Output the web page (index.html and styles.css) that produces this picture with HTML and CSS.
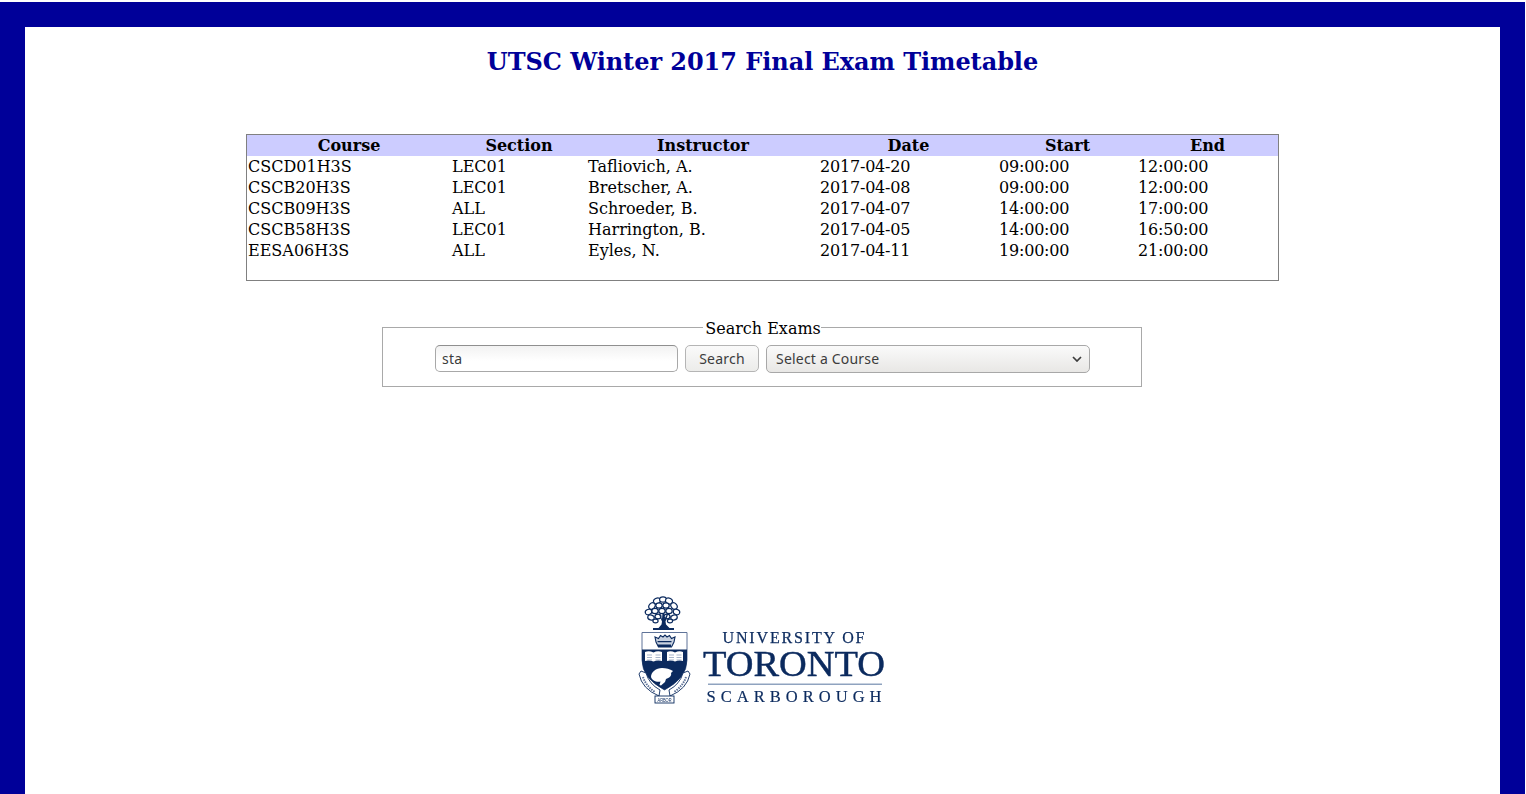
FILE: index.html
```html
<!DOCTYPE html>
<html lang="en">
<head>
<meta charset="utf-8">
<title>UTSC Winter 2017 Final Exam Timetable</title>
<link rel="stylesheet" href="styles.css">
</head>
<body>
<main class="frame">
  <h1 class="title">UTSC Winter 2017 Final Exam Timetable</h1>
  <div class="table-box">
    <table class="exams">
      <colgroup>
        <col class="c-course"><col class="c-section"><col class="c-instructor"><col class="c-date"><col class="c-start"><col class="c-end">
      </colgroup>
      <thead>
        <tr><th>Course</th><th>Section</th><th>Instructor</th><th>Date</th><th>Start</th><th>End</th></tr>
      </thead>
      <tbody>
        <tr><td>CSCD01H3S</td><td>LEC01</td><td>Tafliovich, A.</td><td class="num">2017-04-20</td><td class="num">09:00:00</td><td class="num">12:00:00</td></tr>
        <tr><td>CSCB20H3S</td><td>LEC01</td><td>Bretscher, A.</td><td class="num">2017-04-08</td><td class="num">09:00:00</td><td class="num">12:00:00</td></tr>
        <tr><td>CSCB09H3S</td><td>ALL</td><td>Schroeder, B.</td><td class="num">2017-04-07</td><td class="num">14:00:00</td><td class="num">17:00:00</td></tr>
        <tr><td>CSCB58H3S</td><td>LEC01</td><td>Harrington, B.</td><td class="num">2017-04-05</td><td class="num">14:00:00</td><td class="num">16:50:00</td></tr>
        <tr><td>EESA06H3S</td><td>ALL</td><td>Eyles, N.</td><td class="num">2017-04-11</td><td class="num">19:00:00</td><td class="num">21:00:00</td></tr>
      </tbody>
    </table>
  </div>
  <fieldset class="search">
    <legend class="search-legend">Search Exams</legend>
    <div class="search-row">
      <input class="search-input" type="text" value="sta">
      <button class="search-btn" type="button">Search</button>
      <div class="select-wrap">
        <select class="course-select"><option>Select a Course</option></select>
        <svg class="chevron" viewBox="0 0 10 6" width="10" height="6"><path d="M1 1l4 4 4-4" fill="none" stroke="#3c3c3c" stroke-width="1.7"/></svg>
      </div>
    </div>
  </fieldset>
  <div class="logo-row">
    <svg class="logo" viewBox="636 595 252 112" width="252" height="112">
      <!-- tree canopy -->
      <g class="leaves">
        <ellipse cx="656" cy="601" rx="3.600" ry="2.800" transform="rotate(-30 656 601)"/>
        <ellipse cx="662" cy="599.500" rx="3.400" ry="2.700"/>
        <ellipse cx="668" cy="601" rx="3.600" ry="2.800" transform="rotate(30 668 601)"/>
        <ellipse cx="651" cy="606" rx="3.600" ry="2.800" transform="rotate(-50 651 606)"/>
        <ellipse cx="658" cy="605.500" rx="3.200" ry="2.600"/>
        <ellipse cx="665" cy="605.500" rx="3.200" ry="2.600"/>
        <ellipse cx="673" cy="606" rx="3.600" ry="2.800" transform="rotate(50 673 606)"/>
        <ellipse cx="647.500" cy="612" rx="3.300" ry="2.600" transform="rotate(-20 647.500 612)"/>
        <ellipse cx="654" cy="611" rx="3.200" ry="2.600"/>
        <ellipse cx="661" cy="611" rx="3.200" ry="2.600"/>
        <ellipse cx="668" cy="611" rx="3.200" ry="2.600"/>
        <ellipse cx="675.500" cy="612" rx="3.300" ry="2.600" transform="rotate(20 675.500 612)"/>
        <ellipse cx="650" cy="617.500" rx="3.300" ry="2.500" transform="rotate(15 650 617.500)"/>
        <ellipse cx="657" cy="616.500" rx="3" ry="2.400"/>
        <ellipse cx="666" cy="616.500" rx="3" ry="2.400"/>
        <ellipse cx="673" cy="617.500" rx="3.300" ry="2.500" transform="rotate(-15 673 617.500)"/>
        <ellipse cx="654.500" cy="621" rx="2.600" ry="1.800"/>
        <ellipse cx="669" cy="621" rx="2.600" ry="1.800"/>
      </g>
      <path class="ink" d="M658.500 614l2.500 5 .5-6h1.500l.5 6 2.500-5 1 .5-2.500 7 .5 3 3.500 3.500h-11l3-3.500.5-3-3-7z"/>
      <rect class="ink" x="652" y="628" width="21" height="2"/>
      <!-- shield -->
      <path class="shield" d="M641 632.500H686V660Q686 678 663.500 690Q641 678 641 660Z"/>
      <path class="ink" d="M641 649.500H686V660Q686 678 663.500 690Q641 678 641 660Z"/>
      <!-- crown -->
      <path class="crown" d="M654 637l3.500 1.500 2-3 2.500 1.500 2-2 2 2 2.500-1.500 2 3 3.500-1.500-1 5-2.500 5h-13l-2.500-5z"/>
      <path class="ink" d="M656.500 641h14v1.300h-14zM657 644.500h13v2.500h-13z"/>
      <!-- books -->
      <path class="page" d="M644 652q4-1.500 8.500.5q4-2 8.500-.5v9q-4.500-1-8.500.5q-4.500-1.500-8.500-.5zM666 652q4-1.500 8 .5q4-2 8-.5v9q-4-1-8 .5q-4-1.500-8-.5z"/>
      <path class="page-lines" d="M646 655h5M646 657.500h5M646 660h5M654.500 655h5M654.500 657.500h5M654.500 660h5M668 655h5M668 657.500h5M668 660h5M675.500 655h5M675.500 657.500h5M675.500 660h5"/>
      <!-- beaver -->
      <path class="page" d="M650 677c0-5 5-9 11-9c4 0 8 1 11 3l-2 2c1 3-2 5-5 6l-1 3-4 3.500-1.500-.5 1-3.500c-4 1-8.500-1-9.500-4.500z"/>
      <!-- ribbons and motto -->
      <path class="ribbon" d="M640 671l5 2q3 11 14 17l-1 6q-17-7-20-22zM687 671l-5 2q-3 11-14 17l1 6q17-7 20-22z"/>
      <path class="motto-marks" d="M642 677q3 9 12 15M685 677q-3 9-12 15"/>
      <rect class="ribbon" x="654" y="696" width="19" height="7"/>
      <text class="logo-motto" x="663.500" y="701.500" text-anchor="middle" textLength="14" lengthAdjust="spacingAndGlyphs">ARBOR</text>
      <text class="logo-t1" x="721.500" y="642.500" textLength="142">UNIVERSITY OF</text>
      <text class="logo-t2" x="702" y="676" textLength="182" lengthAdjust="spacingAndGlyphs">TORONTO</text>
      <rect class="logo-rule" x="707" y="683.500" width="174" height="1.500"/>
      <text class="logo-t3" x="705.500" y="702" textLength="175">SCARBOROUGH</text>
    </svg>
  </div>
</main>
</body>
</html>
```

FILE: styles.css
```css
html, body {
  margin: 0;
  padding: 0;
  background: #fff;
  height: 100%;
  overflow: hidden;
}

body {
  padding: 2px 1px 0 0;
  box-sizing: border-box;
  font-family: "DejaVu Serif", serif;
  font-size: 16px;
  color: #000;
}

.frame {
  box-sizing: border-box;
  height: 100%;
  border: 25px solid #000099;
  border-bottom: 0;
  padding-top: 18px;
}

.title {
  margin: 0;
  text-align: center;
  color: #000099;
  font-size: 24px;
  line-height: 34px;
  font-weight: bold;
  letter-spacing: -0.05px;
}

.table-box {
  width: 1031px;
  height: 145px;
  margin: 55px auto 0;
  border: 1px solid #808080;
}

.exams {
  width: 1031px;
  table-layout: fixed;
  border-collapse: collapse;
}

.c-course { width: 204px; }
.c-section { width: 136px; }
.c-instructor { width: 232px; }
.c-date { width: 179px; }
.c-start { width: 139px; }
.c-end { width: 141px; }

.exams th {
  background: #ccccff;
  padding: 1px;
  font-weight: bold;
  text-align: center;
  line-height: 19px;
}

.exams td {
  padding: 1px;
  text-align: left;
  line-height: 19px;
}

.exams .num {
  letter-spacing: -0.2px;
}

.search {
  width: 758px;
  box-sizing: content-box;
  margin: 36px auto 0 357px;
  padding: 7px 0 13px;
  border: 1px solid #a9a9a9;
  min-width: 0;
}

.search-legend {
  padding: 2px 0 0 2px;
  margin: 0 auto;
  text-align: center;
  line-height: 19px;
}

.search-row {
  display: flex;
  justify-content: center;
  align-items: flex-start;
  gap: 7px;
  padding-left: 1px;
  font-family: "Noto Sans", "Open Sans", sans-serif;
  font-size: 14px;
  letter-spacing: 0.2px;
}

.search-input,
.search-btn,
.course-select {
  box-sizing: border-box;
  margin: 0;
  font: inherit;
  letter-spacing: inherit;
  color: #3c3c3c;
  border-radius: 5px;
  height: 27px;
  outline: none;
}

.search-input {
  width: 243px;
  padding: 0 6px;
  border: 1px solid #a8a8a8;
  border-top-color: #8f8f8f;
  background: linear-gradient(#f2f2f2, #fff 60%);
}

.search-btn {
  width: 74px;
  padding: 0;
  border: 1px solid #b5b5b5;
  background: linear-gradient(#fafafa, #ececea);
}

.select-wrap {
  position: relative;
  width: 324px;
  height: 28px;
}

.course-select {
  appearance: none;
  -webkit-appearance: none;
  width: 100%;
  height: 28px;
  padding: 0 9px 2px;
  border: 1px solid #a8a8a8;
  background: linear-gradient(#fafafa, #e8e7e5);
}

.chevron {
  position: absolute;
  right: 8px;
  top: 11px;
}

.logo-row {
  margin-top: 208px;
  text-align: center;
  line-height: 0;
}

.logo {
  display: inline-block;
  filter: blur(0.4px);
}

.ink { fill: #0b2a5e; }

.leaves ellipse {
  fill: #fff;
  stroke: #0b2a5e;
  stroke-width: 1.2;
}

.shield {
  fill: #fff;
  stroke: #5f7398;
  stroke-width: 1;
}

.crown {
  fill: #c9d2e0;
  stroke: #0b2a5e;
  stroke-width: 1.1;
}

.page { fill: #fff; }

.page-lines {
  fill: none;
  stroke: #8396b4;
  stroke-width: 0.7;
}

.ribbon {
  fill: #fff;
  stroke: #0b2a5e;
  stroke-width: 0.9;
}

.motto-marks {
  fill: none;
  stroke: #5f7398;
  stroke-width: 2;
  stroke-dasharray: 1.5 1;
}

.logo-t1, .logo-t2, .logo-t3 {
  font-family: "Liberation Serif", serif;
  fill: #0b2a5e;
  stroke: #0b2a5e;
}

.logo-t1 { font-size: 16px; stroke-width: 0.25; }
.logo-t2 { font-size: 36px; stroke-width: 0.45; }
.logo-t3 { font-size: 16.5px; stroke-width: 0.2; }

.logo-motto {
  font-family: "Liberation Sans", sans-serif;
  font-size: 5px;
  fill: #0b2a5e;
}

.logo-rule { fill: #8fa3bf; }
```
